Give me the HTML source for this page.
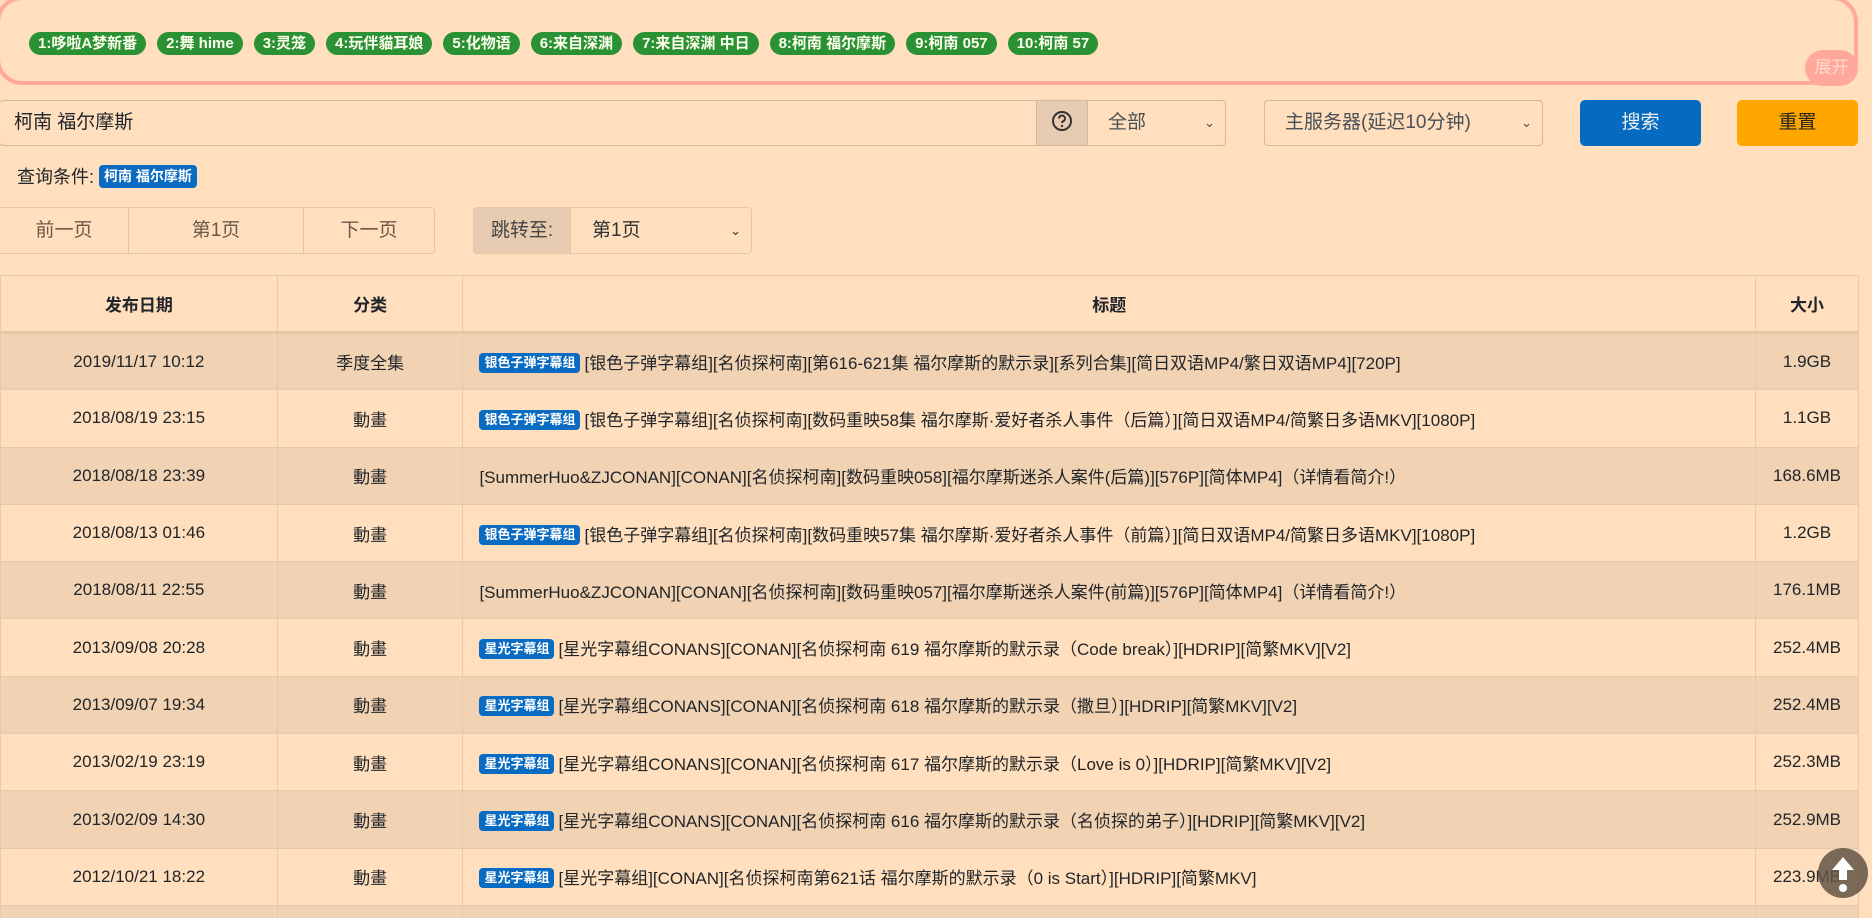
<!DOCTYPE html>
<html style="height:918px;overflow:hidden"><head><meta charset="utf-8"><style>
*{box-sizing:border-box;margin:0;padding:0}
body{width:1872px;height:918px;overflow:hidden;background:#ffdfbd;font-family:"Liberation Sans","Noto Sans CJK SC",sans-serif;color:#212529;position:relative}
.top{position:absolute;left:-4px;top:-4px;width:1862px;height:89px;border:4px solid #ffa89b;border-radius:26px}
.tags{position:absolute;left:29px;top:32px;display:flex;gap:11px}
.tag{background:#2a9134;color:#ffe;font-weight:bold;font-size:15px;height:23px;line-height:23px;padding:0 9px;border-radius:12px;white-space:nowrap}
.zk{position:absolute;left:1805px;top:50px;width:53px;height:36px;background:#ffa89b;color:#ffd9cc;border-radius:18px;font-size:17px;line-height:36px;text-align:center}
.ctl{position:absolute;top:100px;height:46px;border:1px solid #d2b89d;font-size:19px;line-height:44px;color:#495057}
.arrow{position:absolute;right:10px;top:0;font-size:13px}
.btn{position:absolute;top:100px;height:46px;border-radius:5px;font-size:19px;line-height:46px;text-align:center}
.q{position:absolute;left:17px;top:163px;font-size:18px}
.qb{display:inline-block;background:#0a6bc2;color:#fff;font-weight:bold;font-size:14px;padding:0 5px;height:23px;line-height:23px;border-radius:4px;vertical-align:2px}
.pg{position:absolute;top:207px;height:47px;border:1px solid #e3c7a7;font-size:19px;line-height:45px;text-align:center;color:#6c5a48}
.tw{position:absolute;left:0;top:275px;width:1859px;height:643px;overflow:hidden}
table{width:1859px;border-collapse:collapse;font-size:17px}
td,th{border:1px solid #e6c9aa;text-align:center;height:57.3px;padding:0}
th{font-weight:bold;font-size:17px;border-bottom:3px solid #e5c8a8;height:57px}
tr:nth-child(even) td{background:#f1d3b3}
td.t{text-align:left;padding-left:16px;white-space:nowrap}
.b{display:inline-block;background:#0a6bc2;color:#fff;font-weight:bold;font-size:13px;height:20px;line-height:20px;padding:0 5px;border-radius:4px;vertical-align:2px;margin-right:4px}
.up{position:absolute;left:1818px;top:848px;width:50px;height:50px;border-radius:50%;background:rgba(100,85,70,.85)}
</style></head><body>
<div class="top"></div>
<div class="tags"><span class="tag">1:哆啦A梦新番</span><span class="tag">2:舞 hime</span><span class="tag">3:灵笼</span><span class="tag">4:玩伴貓耳娘</span><span class="tag">5:化物语</span><span class="tag">6:来自深渊</span><span class="tag">7:来自深渊 中日</span><span class="tag">8:柯南 福尔摩斯</span><span class="tag">9:柯南 057</span><span class="tag">10:柯南 57</span></div>
<div class="zk">展开</div>
<div class="ctl" style="left:-1px;width:1038px;padding-left:14px;border-radius:4px 0 0 4px;color:#212529">柯南 福尔摩斯</div>
<div class="ctl" style="left:1036px;width:52px;background:#e7ccb1;text-align:center"><svg width="22" height="22" viewBox="0 0 22 22" style="vertical-align:-4px"><circle cx="11" cy="11" r="9" fill="none" stroke="#333" stroke-width="2"/><path d="M8 8.5a3 3 0 1 1 4 2.8c-.8.4-1 .9-1 1.7" fill="none" stroke="#333" stroke-width="2"/><circle cx="11" cy="16" r="1.2" fill="#333"/></svg></div>
<div class="ctl" style="left:1087px;width:139px;padding-left:20px;border-radius:0 4px 4px 0">全部<span class="arrow">&#8964;</span></div>
<div class="ctl" style="left:1264px;width:279px;padding-left:20px;border-radius:4px">主服务器(延迟10分钟)<span class="arrow">&#8964;</span></div>
<div class="btn" style="left:1580px;width:121px;background:#066bc0;color:#f0f0f0">搜索</div>
<div class="btn" style="left:1737px;width:121px;background:#ffa600;color:#222">重置</div>
<div class="q">查询条件: <span class="qb">柯南 福尔摩斯</span></div>
<div class="pg" style="left:-1px;width:130px;border-radius:0">前一页</div>
<div class="pg" style="left:128px;width:176px">第1页</div>
<div class="pg" style="left:303px;width:132px;border-radius:0 4px 4px 0">下一页</div>
<div class="pg" style="left:473px;width:98px;background:#e7ccb1;border-radius:4px 0 0 4px;color:#444">跳转至:</div>
<div class="pg" style="left:570px;width:182px;text-align:left;padding-left:21px;border-radius:0 4px 4px 0;color:#333">第1页<span style="position:absolute;right:10px;font-size:13px">&#8964;</span></div>
<div class="tw"><table>
<colgroup><col style="width:277px"><col style="width:186px"><col style="width:1293px"><col style="width:103px"></colgroup>
<tr><th>发布日期</th><th>分类</th><th>标题</th><th>大小</th></tr>
<tr><td>2019/11/17 10:12</td><td>季度全集</td><td class="t"><span class="b">银色子弹字幕组</span>[银色子弹字幕组][名侦探柯南][第616-621集 福尔摩斯的默示录][系列合集][简日双语MP4/繁日双语MP4][720P]</td><td>1.9GB</td></tr>
<tr><td>2018/08/19 23:15</td><td>動畫</td><td class="t"><span class="b">银色子弹字幕组</span>[银色子弹字幕组][名侦探柯南][数码重映58集 福尔摩斯·爱好者杀人事件（后篇）][简日双语MP4/简繁日多语MKV][1080P]</td><td>1.1GB</td></tr>
<tr><td>2018/08/18 23:39</td><td>動畫</td><td class="t">[SummerHuo&amp;ZJCONAN][CONAN][名侦探柯南][数码重映058][福尔摩斯迷杀人案件(后篇)][576P][简体MP4]（详情看简介!）</td><td>168.6MB</td></tr>
<tr><td>2018/08/13 01:46</td><td>動畫</td><td class="t"><span class="b">银色子弹字幕组</span>[银色子弹字幕组][名侦探柯南][数码重映57集 福尔摩斯·爱好者杀人事件（前篇）][简日双语MP4/简繁日多语MKV][1080P]</td><td>1.2GB</td></tr>
<tr><td>2018/08/11 22:55</td><td>動畫</td><td class="t">[SummerHuo&amp;ZJCONAN][CONAN][名侦探柯南][数码重映057][福尔摩斯迷杀人案件(前篇)][576P][简体MP4]（详情看简介!）</td><td>176.1MB</td></tr>
<tr><td>2013/09/08 20:28</td><td>動畫</td><td class="t"><span class="b">星光字幕组</span>[星光字幕组CONANS][CONAN][名侦探柯南 619 福尔摩斯的默示录（Code break）][HDRIP][简繁MKV][V2]</td><td>252.4MB</td></tr>
<tr><td>2013/09/07 19:34</td><td>動畫</td><td class="t"><span class="b">星光字幕组</span>[星光字幕组CONANS][CONAN][名侦探柯南 618 福尔摩斯的默示录（撒旦）][HDRIP][简繁MKV][V2]</td><td>252.4MB</td></tr>
<tr><td>2013/02/19 23:19</td><td>動畫</td><td class="t"><span class="b">星光字幕组</span>[星光字幕组CONANS][CONAN][名侦探柯南 617 福尔摩斯的默示录（Love is 0）][HDRIP][简繁MKV][V2]</td><td>252.3MB</td></tr>
<tr><td>2013/02/09 14:30</td><td>動畫</td><td class="t"><span class="b">星光字幕组</span>[星光字幕组CONANS][CONAN][名侦探柯南 616 福尔摩斯的默示录（名侦探的弟子）][HDRIP][简繁MKV][V2]</td><td>252.9MB</td></tr>
<tr><td>2012/10/21 18:22</td><td>動畫</td><td class="t"><span class="b">星光字幕组</span>[星光字幕组][CONAN][名侦探柯南第621话 福尔摩斯的默示录（0 is Start）][HDRIP][简繁MKV]</td><td>223.9MB</td></tr>
<tr><td>&nbsp;</td><td></td><td class="t"></td><td></td></tr>
</table></div>
<div class="up"><svg width="50" height="50" viewBox="0 0 50 50"><path d="M25 9 L36 22 H29 V32 H21 V22 H14 Z" fill="#fff"/><circle cx="25" cy="40" r="4" fill="#fff"/></svg></div>
</body></html>
